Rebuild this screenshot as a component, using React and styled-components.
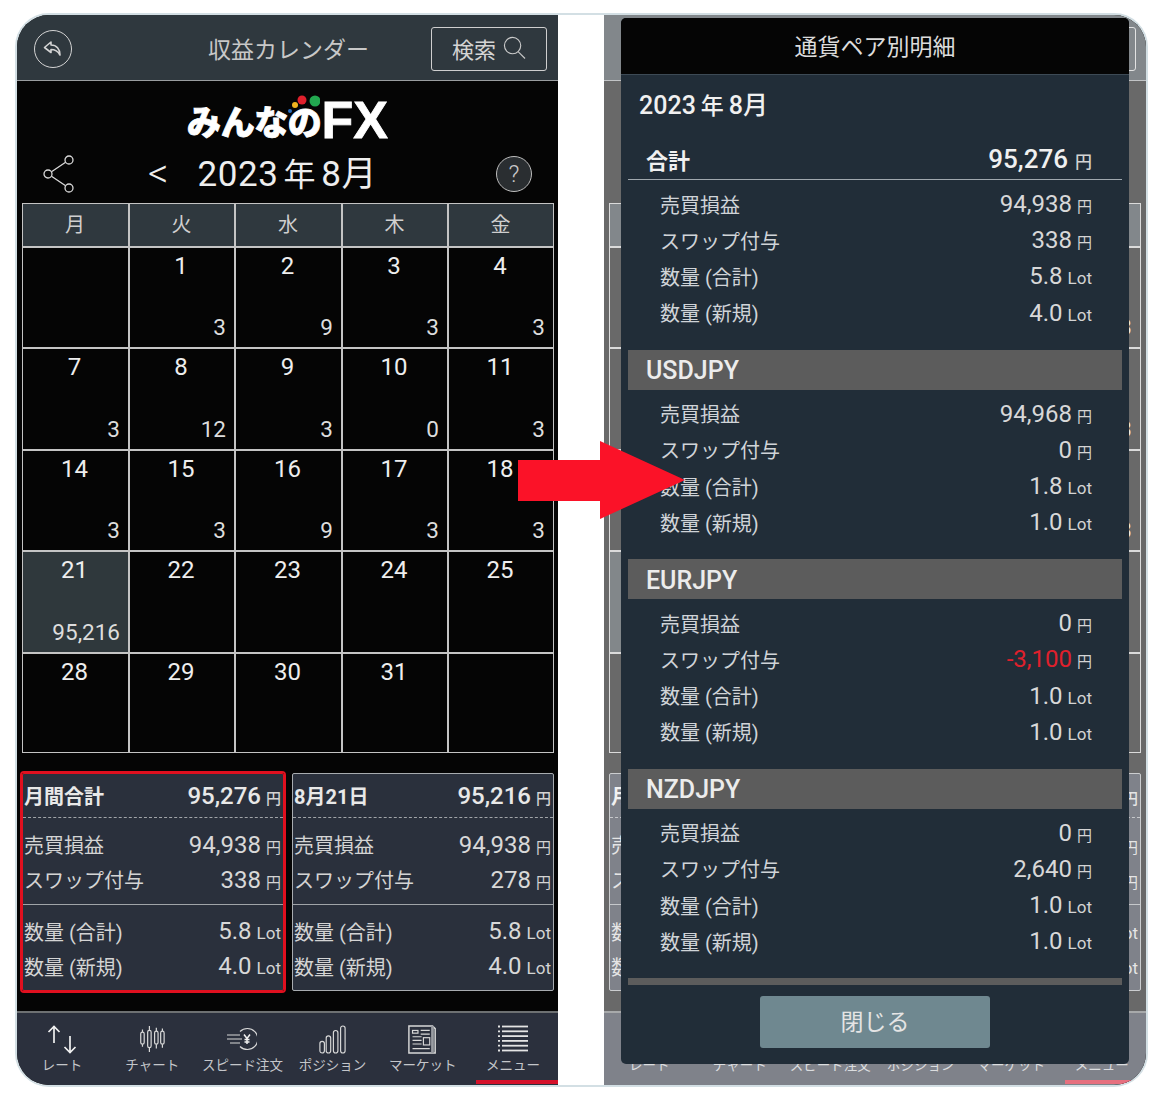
import React from "react";
import styled, { createGlobalStyle } from "styled-components";

const FONT = `Roboto, "Noto Sans CJK JP", sans-serif`;

const weeks = [
  [null, [1, 3], [2, 9], [3, 3], [4, 3]],
  [[7, 3], [8, 12], [9, 3], [10, 0], [11, 3]],
  [[14, 3], [15, 3], [16, 9], [17, 3], [18, 3]],
  [[21, "95,216"], [22], [23], [24], [25]],
  [[28], [29], [30], [31], null],
];

const pairs = [
  {
    name: "USDJPY",
    rows: [["94,968", "円"], ["0", "円"], ["1.8", "Lot"], ["1.0", "Lot"]],
  },
  {
    name: "EURJPY",
    rows: [["0", "円"], ["-3,100", "円", true], ["1.0", "Lot"], ["1.0", "Lot"]],
  },
  {
    name: "NZDJPY",
    rows: [["0", "円"], ["2,640", "円"], ["1.0", "Lot"], ["1.0", "Lot"]],
  },
];

const rowLabels = ["売買損益", "スワップ付与", "数量 (合計)", "数量 (新規)"];

const IconRate = () => (
  <svg width="46" height="29" viewBox="0 0 46 29" fill="none" stroke="#f0f0f0" strokeWidth="1.7">
    <path d="M15 18V1.500M9.500 7l5.500-5.500L20.500 7" />
    <path d="M31 11v16.500M25.500 22l5.500 5.500 5.500-5.500" />
  </svg>
);

const IconChart = () => (
  <svg width="26" height="28" viewBox="0 0 30 32" fill="none" stroke="#d8d8d8" strokeWidth="1.4">
    <rect x="2" y="8" width="4" height="14" rx="2" />
    <path d="M4 5v3M4 22v3" />
    <rect x="10" y="6" width="4" height="20" rx="2" />
    <path d="M12 1v5M12 26v5" />
    <rect x="18" y="7" width="4" height="15" rx="2" />
    <path d="M20 3v4M20 22v5" />
    <rect x="25" y="7" width="4" height="15" rx="2" />
    <path d="M27 4v3M27 22v4" />
  </svg>
);

const IconSpeed = () => (
  <SpeedSvg width="30" height="24" viewBox="0 0 30 24" fill="none" stroke="#d8d8d8" strokeWidth="1.2">
    <path d="M13 4.500a10.500 10.500 0 1 1 0 15" />
    <path d="M0 8h13M0 12h15M3 16h10" />
    <path d="M17 7.500l3 4 3-4M20 11.500v5.500M17.500 12.500h5M17.500 15h5" strokeWidth="1.500" stroke="#f0f0f0" />
  </SpeedSvg>
);

const IconPosition = () => (
  <svg width="27" height="29" viewBox="0 0 30 32" fill="none" stroke="#d8d8d8" strokeWidth="1.3">
    <rect x="1" y="18" width="5" height="13" rx="2.500" />
    <rect x="8" y="12" width="5" height="19" rx="2.500" />
    <rect x="16" y="6" width="5" height="25" rx="2.500" />
    <rect x="24" y="1" width="5" height="30" rx="2.500" />
  </svg>
);

const IconMarket = () => (
  <svg width="29" height="29" viewBox="0 0 32 32" fill="none" stroke="#d8d8d8" strokeWidth="1.3">
    <path d="M1 1h26l3 3v27H1z" strokeWidth="1.6" />
    <path d="M27 1v30" strokeWidth="3" stroke="#9a9da3" />
    <rect x="5" y="6" width="6" height="3" />
    <path d="M14 6h10M14 10h10M5 13h10M5 17h10M5 21h10M5 26h19" />
    <rect x="17" y="14" width="7" height="8" />
  </svg>
);

const IconMenu = () => (
  <svg width="30" height="27" viewBox="0 0 30 27" fill="none" stroke="#e4e4e4" strokeWidth="1.8">
    {[1.5, 6.3, 11.1, 15.9, 20.700, 25.500].map((y) => (
      <g key={y}>
        <path d="M0 0h2" transform={`translate(0 ${y})`} />
        <path d="M4 0h26" transform={`translate(0 ${y})`} />
      </g>
    ))}
  </svg>
);

const tabs = [
  { label: "レート", Icon: IconRate },
  { label: "チャート", Icon: IconChart },
  { label: "スピード注文", Icon: IconSpeed },
  { label: "ポジション", Icon: IconPosition },
  { label: "マーケット", Icon: IconMarket },
  { label: "メニュー", Icon: IconMenu, active: true },
];

const Amount = ({ value, unit, negative }) => (
  <AmountText $negative={negative}>
    {value}
    <Unit $lot={unit === "Lot"}>{unit}</Unit>
  </AmountText>
);

const SummaryCard = ({ title, total, rows, marked }) => (
  <Card $marked={marked}>
    <CardTitle>
      <span>{title}</span>
      <strong>
        {total}
        <Unit>円</Unit>
      </strong>
    </CardTitle>
    <CardGroup $dashed>
      <CardRow>
        <span>売買損益</span>
        <Amount value={rows[0]} unit="円" />
      </CardRow>
      <CardRow>
        <span>スワップ付与</span>
        <Amount value={rows[1]} unit="円" />
      </CardRow>
    </CardGroup>
    <CardGroup>
      <CardRow>
        <span>数量 (合計)</span>
        <Amount value={rows[2]} unit="Lot" />
      </CardRow>
      <CardRow>
        <span>数量 (新規)</span>
        <Amount value={rows[3]} unit="Lot" />
      </CardRow>
    </CardGroup>
  </Card>
);

const CalendarScreen = ({ marked }) => (
  <Screen>
    <Header>
      <BackButton>
        <svg width="20" height="18" viewBox="0 0 20 18" fill="none" stroke="#d4d4d4" strokeWidth="1.6" strokeLinejoin="round">
          <path d="M8 2L1.500 7.500 8 12.500V9.500c4 0 6.500 1 9 5.500 0-6-3.500-10-9-10z" />
        </svg>
      </BackButton>
      <HeaderTitle>収益カレンダー</HeaderTitle>
      <SearchButton>
        検索
        <svg width="23" height="23" viewBox="0 0 24 24" fill="none" stroke="#c8c8c8" strokeWidth="1.2">
          <circle cx="10" cy="10" r="8.500" />
          <path d="M16 16.500l7 7" />
        </svg>
      </SearchButton>
    </Header>
    <Body>
      <Logo>
        <LogoKana>みんなの</LogoKana>
        <LogoLatin>FX</LogoLatin>
        <LogoDots width="34" height="24" viewBox="0 0 34 24">
          <circle cx="29" cy="7" r="5.500" fill="#22a84f" />
          <circle cx="16" cy="6" r="4.500" fill="#e0202c" />
          <circle cx="9" cy="11" r="3" fill="#f0b420" />
          <circle cx="4" cy="17" r="2" fill="#2a6fc0" />
        </LogoDots>
      </Logo>
      <DateRow>
        <ShareIcon width="32" height="38" viewBox="0 0 32 38" fill="none" stroke="#d8d8d8" strokeWidth="1.3">
          <circle cx="5" cy="19" r="4" />
          <circle cx="26" cy="5" r="4" />
          <circle cx="26" cy="33" r="4" />
          <path d="M8.500 16.700L22.600 7.300M8.500 21.300l14.100 9.400" />
        </ShareIcon>
        <PrevMark>&lt;</PrevMark>
        <MonthTitle>
          2023<span>年</span>8月
        </MonthTitle>
        <HelpButton>?</HelpButton>
      </DateRow>
      <CalendarGrid>
        {["月", "火", "水", "木", "金"].map((d) => (
          <WeekHead key={d}>{d}</WeekHead>
        ))}
        {weeks.flat().map((cell, i) => (
          <DayCell key={i} $today={cell && cell[0] === 21}>
            {cell && <DayNumber>{cell[0]}</DayNumber>}
            {cell && cell[1] !== undefined && <DayValue>{cell[1]}</DayValue>}
          </DayCell>
        ))}
      </CalendarGrid>
      <Cards>
        <SummaryCard marked={marked} title="月間合計" total="95,276" rows={["94,938", "338", "5.8", "4.0"]} />
        <SummaryCard title="8月21日" total="95,216" rows={["94,938", "278", "5.8", "4.0"]} />
      </Cards>
    </Body>
    <TabBar>
      {tabs.map(({ label, Icon, active }) => (
        <TabItem key={label} $active={active}>
          <TabIcon>
            <Icon />
          </TabIcon>
          <TabLabel>{label}</TabLabel>
        </TabItem>
      ))}
    </TabBar>
  </Screen>
);

const DetailModal = () => (
  <Modal>
    <ModalHeader>通貨ペア別明細</ModalHeader>
    <ModalBody>
      <ModalMonth>
        2023<span>年</span>8月
      </ModalMonth>
      <TotalRow>
        <span>合計</span>
        <strong>
          95,276
          <Unit>円</Unit>
        </strong>
      </TotalRow>
      <DetailRows>
        {[["94,938", "円"], ["338", "円"], ["5.8", "Lot"], ["4.0", "Lot"]].map((r, i) => (
          <DetailRow key={rowLabels[i]}>
            <span>{rowLabels[i]}</span>
            <Amount value={r[0]} unit={r[1]} />
          </DetailRow>
        ))}
      </DetailRows>
      {pairs.map((p) => (
        <section key={p.name}>
          <PairBar>{p.name}</PairBar>
          <DetailRows>
            {p.rows.map((r, i) => (
              <DetailRow key={rowLabels[i]}>
                <span>{rowLabels[i]}</span>
                <Amount value={r[0]} unit={r[1]} negative={r[2]} />
              </DetailRow>
            ))}
          </DetailRows>
        </section>
      ))}
      <ClosingBar />
    </ModalBody>
    <CloseButton>閉じる</CloseButton>
  </Modal>
);

export default function App() {
  return (
    <>
      <GlobalStyle />
      <Frame>
        <CalendarScreen marked />
        <Gap />
        <RightPhone>
          <CalendarScreen />
          <Dim />
          <DetailModal />
        </RightPhone>
        <Arrow width="167" height="79" viewBox="0 0 167 79">
          <path d="M0 19h82V0l85 39-85 39V60H0z" fill="#fb1228" />
        </Arrow>
      </Frame>
    </>
  );
}

const GlobalStyle = createGlobalStyle`
  html, body {
    margin: 0;
    background: #fff;
    font-family: ${FONT};
  }
  * {
    box-sizing: border-box;
  }
`;

const Frame = styled.div`
  position: relative;
  display: grid;
  grid-template-columns: 541px 46px 543px;
  width: 1133px;
  height: 1074px;
  margin: 13px 0 0 15px;
  border: 2px solid #d3dfe4;
  border-radius: 34px;
  overflow: hidden;
  background: #fff;
`;

const Gap = styled.div`
  background: #fff;
`;

const RightPhone = styled.div`
  position: relative;
  overflow: hidden;
`;

const Dim = styled.div`
  position: absolute;
  inset: 0;
  background: rgba(255, 255, 255, 0.4);
`;

const Arrow = styled.svg`
  position: absolute;
  left: 501px;
  top: 426px;
`;

const SpeedSvg = styled.svg`
  margin-top: 2px;
`;

const Screen = styled.div`
  display: flex;
  flex-direction: column;
  height: 1070px;
  background: #050505;
  color: #e8e8e8;
`;

const Header = styled.header`
  display: grid;
  grid-template-columns: 1fr auto 1fr;
  align-items: center;
  height: 66px;
  padding: 2px 11px 0 17px;
  background: #2f383e;
  border-bottom: 1px solid #9a9da0;
`;

const BackButton = styled.div`
  display: flex;
  align-items: center;
  justify-content: center;
  width: 38px;
  height: 38px;
  border: 1.5px solid #d4d4d4;
  border-radius: 50%;
`;

const HeaderTitle = styled.h1`
  margin: 0 4px 2px 0;
  color: #c8c8c8;
  font-size: 23px;
  font-weight: 400;
`;

const SearchButton = styled.div`
  display: flex;
  align-items: center;
  justify-content: center;
  gap: 7px;
  justify-self: end;
  width: 116px;
  height: 44px;
  padding-bottom: 2px;
  border: 1.5px solid #cfcfcf;
  border-radius: 3px;
  color: #d4d4d4;
  font-size: 22px;
`;

const Body = styled.main`
  flex: 1;
  display: flex;
  flex-direction: column;
  padding: 0 4px 0 5px;
`;

const Logo = styled.div`
  position: relative;
  display: flex;
  align-items: flex-end;
  justify-content: center;
  height: 64px;
  padding-right: 1px;
  color: #fff;
`;

const LogoKana = styled.span`
  font-size: 34px;
  font-weight: 900;
  line-height: 43px;
  letter-spacing: -0.4px;
  -webkit-text-stroke: 0.8px #fff;
`;

const LogoLatin = styled.span`
  font-family: "Liberation Sans", sans-serif;
  font-size: 52px;
  font-weight: 700;
  line-height: 50px;
  -webkit-text-stroke: 0.8px #fff;
`;

const LogoDots = styled.svg`
  position: absolute;
  left: 264px;
  top: 13px;
`;

const DateRow = styled.div`
  display: flex;
  align-items: center;
  height: 58px;
  padding: 0 22px 1px 21px;
`;

const ShareIcon = styled.svg`
  flex: none;
`;

const PrevMark = styled.span`
  margin-left: 73px;
  font-size: 40px;
  font-weight: 300;
  line-height: 44px;
  color: #eee;
`;

const MonthTitle = styled.div`
  margin: 0 0 7px 29px;
  font-size: 35px;
  letter-spacing: 0.6px;
  color: #eee;

  span {
    margin: 0 5px;
    font-size: 32px;
  }
`;

const HelpButton = styled.div`
  display: flex;
  align-items: center;
  justify-content: center;
  width: 36px;
  height: 36px;
  margin: 1px 0 0 auto;
  border: 1.5px solid #bdbdbd;
  border-radius: 50%;
  background: #2a2e31;
  color: #c8c8c8;
  font-size: 24px;
  font-weight: 300;
`;

const CalendarGrid = styled.div`
  display: grid;
  grid-template-columns: 105px 104px 105px 104px 104px;
  grid-template-rows: 42px 99px 100px 99px 100px 98px;
  gap: 2px;
  width: 532px;
  padding: 1px;
  background: #c4c4c4;
`;

const WeekHead = styled.div`
  display: flex;
  align-items: center;
  justify-content: center;
  padding: 0 1px 3px 0;
  background: #2f383e;
  color: #cfcfcf;
  font-size: 20px;
`;

const DayCell = styled.div`
  display: flex;
  flex-direction: column;
  justify-content: space-between;
  padding: 3px 8px 6.500px 6px;
  background: ${({ $today }) => ($today ? "#2f383c" : "#050505")};
`;

const DayNumber = styled.div`
  font-size: 24px;
  line-height: 30px;
  text-align: center;
  color: #eee;
`;

const DayValue = styled.div`
  margin-top: auto;
  font-size: 22.500px;
  line-height: 28px;
  text-align: right;
  color: #ddd;
`;

const Cards = styled.div`
  display: grid;
  grid-template-columns: 262px 262px;
  gap: 8px;
  margin-top: 20px;
  height: 218px;
`;

const Card = styled.div`
  display: flex;
  flex-direction: column;
  padding: 0 2px 0 1px;
  border: 1px solid ${({ $marked }) => ($marked ? "#e0101f" : "#a8acb0")};
  border-radius: 2px;
  outline: ${({ $marked }) => ($marked ? "2px solid #e0101f" : "none")};
  background: #2a303c;
`;

const CardTitle = styled.div`
  display: flex;
  align-items: center;
  justify-content: space-between;
  flex: none;
  height: 43px;
  font-size: 20px;
  font-weight: 700;
  color: #e8e8e8;

  strong {
    font-size: 24px;
    font-weight: 500;
  }
`;

const CardGroup = styled.div`
  margin: 0 -2px 0 -1px;
  padding: ${({ $dashed }) => ($dashed ? "9px 2px 7px 1px" : "8.500px 2px 0 1px")};
  border-top: 1px ${({ $dashed }) => ($dashed ? "dashed" : "solid")} #a0a4a8;
`;

const CardRow = styled.div`
  display: flex;
  align-items: center;
  justify-content: space-between;
  height: 35px;
  font-size: 20px;
  color: #d4d4d4;
  white-space: nowrap;
`;

const AmountText = styled.span`
  font-size: 24px;
  color: ${({ $negative }) => ($negative ? "#e0202c" : "#d8d8d8")};
`;

const Unit = styled.span`
  margin-left: 5px;
  font-size: ${({ $lot }) => ($lot ? "17px" : "15px")};
  color: #d4d4d4;
`;

const TabBar = styled.nav`
  display: grid;
  grid-template-columns: repeat(6, 1fr);
  height: 74px;
  background: #2b303d;
  border-top: 2px solid #6d7072;
`;

const TabItem = styled.div`
  position: relative;
  display: flex;
  flex-direction: column;
  align-items: center;

  ${({ $active }) =>
    $active &&
    `&::after {
      content: "";
      position: absolute;
      left: 8px;
      right: 0;
      bottom: 1px;
      height: 4px;
      background: #d5112a;
    }`}
`;

const TabIcon = styled.div`
  display: flex;
  align-items: flex-start;
  justify-content: center;
  height: 30px;
  margin-top: 12px;
`;

const TabLabel = styled.span`
  margin-top: 1px;
  font-size: 13.500px;
  line-height: 18px;
  color: #c4c6ca;
  white-space: nowrap;
`;

const Modal = styled.div`
  position: absolute;
  left: 17px;
  top: 3px;
  display: flex;
  flex-direction: column;
  width: 508px;
  height: 1046px;
  border-radius: 5px;
  overflow: hidden;
  background: #212d38;
`;

const ModalHeader = styled.div`
  display: flex;
  align-items: center;
  justify-content: center;
  flex: none;
  height: 57px;
  padding-bottom: 2px;
  background: #050505;
  border-bottom: 1px solid #3d4a55;
  color: #dcdcdc;
  font-size: 23px;
`;

const ModalBody = styled.div`
  flex: 1;
  padding: 0 7px;
`;

const ModalMonth = styled.div`
  height: 30px;
  margin: 16px 0 0 11px;
  font-size: 25px;
  font-weight: 500;
  line-height: 30px;
  color: #f0f0f0;

  span {
    margin: 0 5px;
    font-size: 23px;
  }
`;

const TotalRow = styled.div`
  display: flex;
  align-items: center;
  justify-content: space-between;
  height: 40px;
  margin-top: 19px;
  padding: 0 30px 2px 18px;
  border-bottom: 1px solid #a0a8ae;
  font-size: 22px;
  font-weight: 700;
  color: #f0f0f0;

  strong {
    font-size: 26px;
    font-weight: 500;
  }

  strong span {
    margin-left: 7px;
    font-size: 17px;
  }
`;

const DetailRows = styled.div`
  padding: 6px 0 18.800px;
`;

const DetailRow = styled.div`
  display: flex;
  align-items: center;
  justify-content: space-between;
  height: 36.200px;
  padding: 0 30px 0 32px;
  font-size: 20px;
  color: #d0d4d8;
`;

const PairBar = styled.div`
  display: flex;
  align-items: center;
  height: 40px;
  padding: 2px 0 0 18px;
  background: #5c5c5c;
  color: #ececec;
  font-size: 25px;
  font-weight: 500;
`;

const ClosingBar = styled.div`
  height: 7px;
  background: #5c5c5c;
`;

const CloseButton = styled.div`
  display: flex;
  align-items: center;
  justify-content: center;
  flex: none;
  width: 230px;
  height: 52px;
  margin: 0 auto 16px;
  padding-bottom: 5px;
  border-radius: 3px;
  background: #6f8890;
  color: #e4e4e4;
  font-size: 23px;
`;
